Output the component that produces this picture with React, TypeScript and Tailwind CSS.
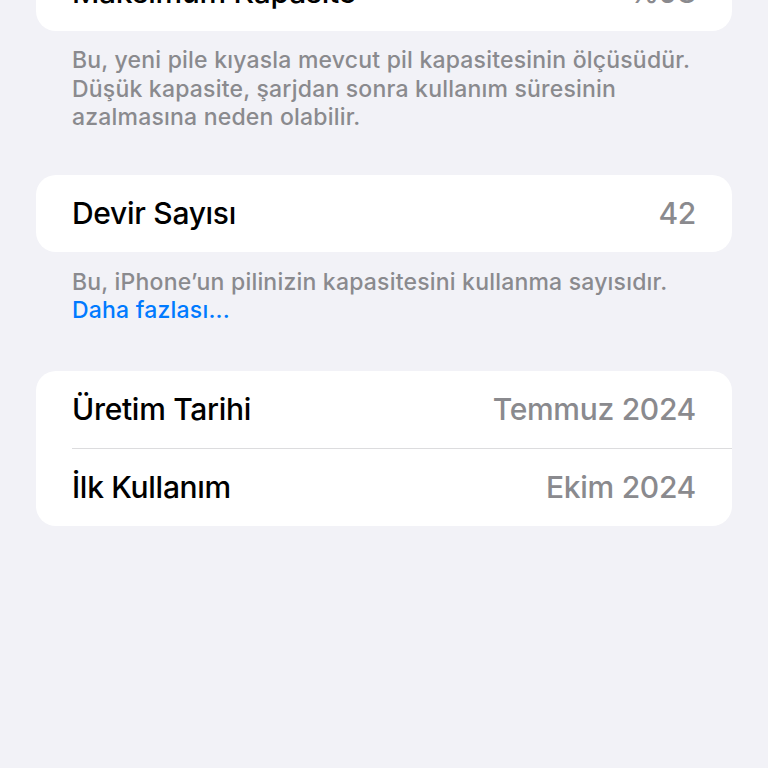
import React from "react";

type Row = { label: string; value: string };

function Card({ rows }: { rows: Row[] }) {
  return (
    <div className="mx-9 overflow-hidden rounded-[20px] bg-white">
      {rows.map((row, i) => (
        <div key={row.label} className="pl-9">
          {i > 0 && <div className="h-px bg-[#dcdcde]" />}
          <div className="flex h-[77px] items-center justify-between pr-9 text-[30px] font-medium tracking-[-0.3px]">
            <span className="text-black">{row.label}</span>
            <span className="text-[#8a8a8e]">{row.value}</span>
          </div>
        </div>
      ))}
    </div>
  );
}

export default function App() {
  return (
    <div
      className="min-h-[768px] overflow-hidden bg-[#f2f2f7]"
      style={{ fontFamily: "Inter, 'Noto Sans', sans-serif" }}
    >
      <div className="-mt-[46px]">
        <Card rows={[{ label: "Maksimum Kapasite", value: "%98" }]} />
      </div>

      <p className="mx-[72px] pt-[15px] text-[23px] font-medium leading-[28.5px] tracking-[0.2px] text-[#8a8a8e]">
        Bu, yeni pile kıyasla mevcut pil kapasitesinin ölçüsüdür.
        <br />
        Düşük kapasite, şarjdan sonra kullanım süresinin
        <br />
        azalmasına neden olabilir.
      </p>

      <div className="mt-[43px]">
        <Card rows={[{ label: "Devir Sayısı", value: "42" }]} />
      </div>

      <p className="mx-[72px] pt-[16px] text-[23px] font-medium leading-[28.5px] tracking-[0.2px] text-[#8a8a8e]">
        Bu, iPhone’un pilinizin kapasitesini kullanma sayısıdır.
        <br />
        <span className="text-[#007aff]">Daha fazlası...</span>
      </p>

      <div className="mt-[46px]">
        <Card
          rows={[
            { label: "Üretim Tarihi", value: "Temmuz 2024" },
            { label: "İlk Kullanım", value: "Ekim 2024" },
          ]}
        />
      </div>
    </div>
  );
}
